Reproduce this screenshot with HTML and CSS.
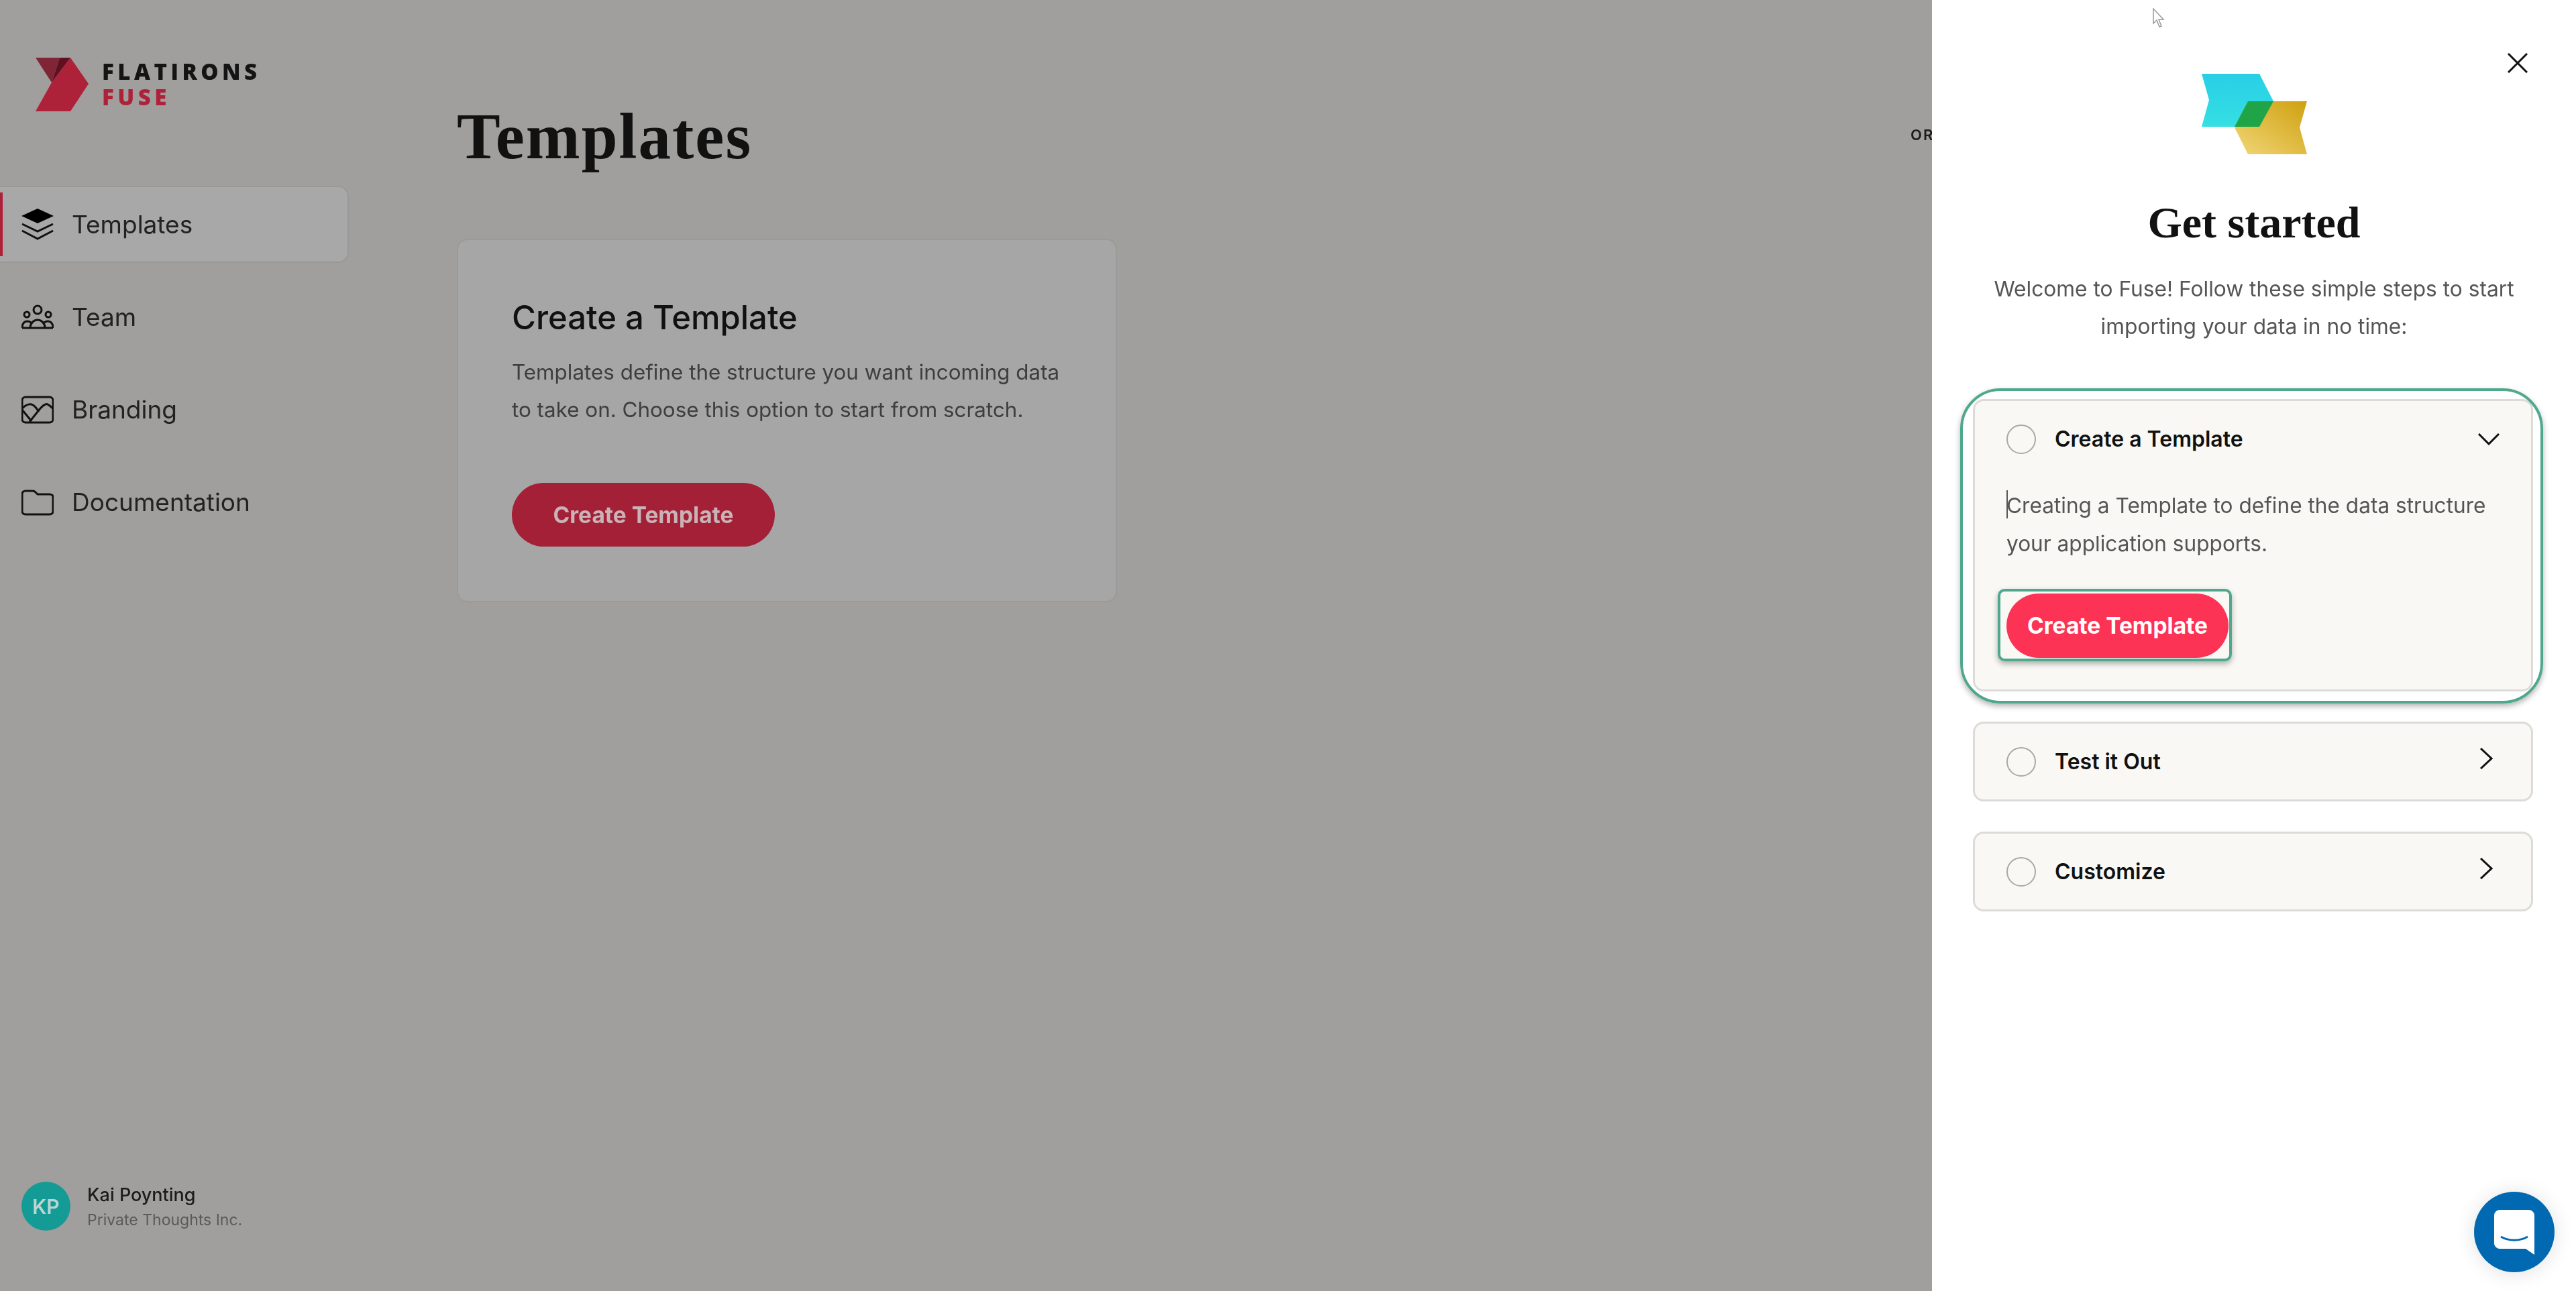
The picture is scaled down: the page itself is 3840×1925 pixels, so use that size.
FILE: index.html
```html
<!DOCTYPE html>
<html lang="en">
<head>
    <meta charset="UTF-8">
    <title>Fuse - Templates</title>
    <link rel="stylesheet" href="styles.css">
</head>
<body>
    <div class="app">
        <aside class="sidebar">
            <div class="brand">
                <svg class="brand-mark" viewBox="0 0 80 80">
                    <polygon points="52,0 79,39 52,80 0,80 24,37" fill="#ae2239"/>
                    <polygon points="0,0 36,0 24,37" fill="#7f2535"/>
                    <polygon points="36,0 52,0 24,37" fill="#5e1020"/>
                </svg>
                <div class="brand-text">
                    <span class="brand-top">FLATIRONS</span>
                    <span class="brand-bottom">FUSE</span>
                </div>
            </div>
            <nav class="nav">
                <a class="nav-item active">
                    <svg class="nav-icon" viewBox="0 0 48 48">
                        <polygon points="24,0 48,11 24,22 0,11" fill="#000"/>
                        <polyline points="1,23 24,34 47,23" fill="none" stroke="#111" stroke-width="3"/>
                        <polyline points="1,33 24,45 47,33" fill="none" stroke="#111" stroke-width="3"/>
                    </svg>
                    Templates
                </a>
                <a class="nav-item">
                    <svg class="nav-icon" viewBox="0 0 48 48">
                        <g fill="none" stroke="#111" stroke-width="3">
                            <circle cx="24" cy="13" r="6"/>
                            <circle cx="8" cy="20" r="4"/>
                            <circle cx="40" cy="20" r="4"/>
                            <path d="M1 40c0-6 3-10 8-10 2 0 4 1 5 2M47 40c0-6-3-10-8-10-2 0-4 1-5 2M13 40c0-7 5-12 11-12s11 5 11 12M1 40h46"/>
                        </g>
                    </svg>
                    Team
                </a>
                <a class="nav-item">
                    <svg class="nav-icon" viewBox="0 0 48 48">
                        <g fill="none" stroke="#111" stroke-width="3">
                            <rect x="1" y="5" width="46" height="38" rx="5"/>
                            <path d="M1 22c4-4 9-7 14-6 5 1 8 7 11 11M12 42l16-20c4-4 8-8 11-6 3 1 5 4 8 6"/>
                            <path d="M1 24l14 17"/>
                        </g>
                    </svg>
                    Branding
                </a>
                <a class="nav-item">
                    <svg class="nav-icon" viewBox="0 0 48 48">
                        <path d="M6 7h11c2 0 3 1 4 2l3 3h18c3 0 5 2 5 4v21c0 3-2 5-5 5H6c-3 0-5-2-5-5V12c0-3 2-5 5-5z" fill="none" stroke="#111" stroke-width="3"/>
                    </svg>
                    Documentation
                </a>
            </nav>
            <div class="user">
                <div class="avatar">KP</div>
                <div class="user-info">
                    <div class="user-name">Kai Poynting</div>
                    <div class="user-org">Private Thoughts Inc.</div>
                </div>
            </div>
        </aside>

        <main class="main">
            <header class="main-header">
                <h1>Templates</h1>
                <span class="org-label">OR</span>
            </header>
            <section class="card">
                <h3>Create a Template</h3>
                <p>Templates define the structure you want incoming data to take on. Choose this option to start from scratch.</p>
                <button class="btn btn-dim" type="button">Create Template</button>
            </section>
        </main>

        <aside class="panel">
            <svg class="cursor" viewBox="0 0 18 30">
                <path d="M1 1v22l5-5 4 10 3-1-4-10h7z" fill="#fff" stroke="#999" stroke-width="1.5"/>
            </svg>
            <svg class="close" viewBox="0 0 30 30">
                <path d="M1 1l28 28M29 1L1 29" stroke="#111" stroke-width="3" fill="none"/>
            </svg>
            <svg class="panel-logo" viewBox="0 0 157 120">
                <defs>
                    <linearGradient id="cyan" x1="0" y1="1" x2="0" y2="0">
                        <stop offset="0" stop-color="#35dfe3"/>
                        <stop offset="1" stop-color="#27cfe6"/>
                    </linearGradient>
                    <linearGradient id="gold" x1="0" y1="1" x2="1" y2="0">
                        <stop offset="0" stop-color="#f2d778"/>
                        <stop offset="1" stop-color="#cfa010"/>
                    </linearGradient>
                </defs>
                <polygon points="0,0 86,0 107,41 86,79 0,79 11,39" fill="url(#cyan)"/>
                <polygon points="69,41 157,41 146,80 157,120 69,120 49,80" fill="url(#gold)"/>
                <polygon points="69,41 107,41 86,79 49,79" fill="#1fa548"/>
            </svg>
            <h2>Get started</h2>
            <p class="intro">Welcome to Fuse! Follow these simple steps to start<br>importing your data in no time:</p>

            <div class="steps">
                <div class="highlight highlight-step"></div>
                <div class="step">
                    <div class="step-head">
                        <span class="radio"></span>
                        <span class="step-title">Create a Template</span>
                        <svg class="chevron-down" viewBox="0 0 32 18">
                            <path d="M1 1l15 15L31 1" fill="none" stroke="#111" stroke-width="3"/>
                        </svg>
                    </div>
                    <div class="step-body">
                        <span class="caret"></span>
                        <p>Creating a Template to define the data structure your application supports.</p>
                        <div class="btn-wrap">
                            <div class="highlight highlight-btn"></div>
                            <button class="btn btn-live" type="button">Create Template</button>
                        </div>
                    </div>
                </div>
                <div class="step">
                    <div class="step-head">
                        <span class="radio"></span>
                        <span class="step-title">Test it Out</span>
                        <svg class="chevron-right" viewBox="0 0 20 32">
                            <path d="M2 1l16 15L2 31" fill="none" stroke="#111" stroke-width="3"/>
                        </svg>
                    </div>
                </div>
                <div class="step">
                    <div class="step-head">
                        <span class="radio"></span>
                        <span class="step-title">Customize</span>
                        <svg class="chevron-right" viewBox="0 0 20 32">
                            <path d="M2 1l16 15L2 31" fill="none" stroke="#111" stroke-width="3"/>
                        </svg>
                    </div>
                </div>
            </div>

            <div class="chat">
                <svg viewBox="0 0 60 67">
                    <path d="M8 0h44c4 0 8 4 8 8v59L47 58H8c-4 0-8-4-8-8V8c0-4 4-8 8-8z" fill="#fff"/>
                    <path d="M10 40c12 7 28 7 40 0" fill="none" stroke="#0069b1" stroke-width="3"/>
                </svg>
            </div>
        </aside>
    </div>
</body>
</html>
```

FILE: styles.css
```css
* {
    box-sizing: border-box;
}
body {
    margin: 0;
    font-family: Inter, "Liberation Sans", sans-serif;
    color: #111;
    background-color: #a09f9d;
    overflow: hidden;
}
/* the source is a soft video frame */
.app {
    display: flex;
    height: 100vh;
    filter: blur(0.7px);
}

/* Sidebar */
.sidebar {
    width: 520px;
    flex-shrink: 0;
    display: flex;
    flex-direction: column;
    padding-top: 86px;
}
.brand {
    display: flex;
    align-items: center;
    gap: 19px;
    padding-left: 53px;
    height: 80px;
}
.brand-mark {
    width: 80px;
    height: 80px;
}
.brand-text {
    display: flex;
    flex-direction: column;
    font-family: "Open Sans", sans-serif;
    font-weight: 800;
    font-size: 33px;
    line-height: 38px;
    letter-spacing: 5.5px;
}
.brand-top {
    color: #141414;
}
.brand-bottom {
    color: #ae2239;
}
.nav {
    margin-top: 111px;
    display: flex;
    flex-direction: column;
    gap: 23px;
}
.nav-item {
    display: flex;
    align-items: center;
    gap: 27px;
    width: 520px;
    height: 115px;
    padding-left: 32px;
    font-size: 37px;
    color: #222;
    border: 2px solid transparent;
    border-left: 0;
    border-radius: 0 16px 16px 0;
}
.nav-item.active {
    position: relative;
    background-color: #a8a8a8;
    border-color: #999896;
}
.nav-item.active::before {
    content: "";
    position: absolute;
    left: 0;
    top: 8px;
    bottom: 8px;
    width: 4px;
    background-color: #ae1f38;
}
.nav-icon {
    width: 48px;
    height: 48px;
    flex-shrink: 0;
}
.user {
    margin-top: auto;
    margin-bottom: 87px;
    padding-left: 32px;
    display: flex;
    align-items: center;
    gap: 25px;
}
.avatar {
    width: 73px;
    height: 73px;
    border-radius: 50%;
    background-color: #159b95;
    color: #b9d6d3;
    font-size: 30px;
    font-weight: 600;
    display: flex;
    align-items: center;
    justify-content: center;
}
.user-info {
    margin-top: 5px;
}
.user-name {
    font-size: 27px;
    font-weight: 500;
    line-height: 36px;
    color: #1c1c1c;
}
.user-org {
    font-size: 23px;
    line-height: 38px;
    color: #5a5a5a;
}

/* Main */
.main {
    flex: 1;
    padding-left: 161px;
    overflow: hidden;
}
.main-header {
    display: flex;
    justify-content: space-between;
    align-items: center;
    height: 120px;
    margin-top: 144px;
}
h1 {
    margin: 0;
    font-family: "Liberation Serif", serif;
    font-weight: 700;
    font-size: 97px;
    line-height: 120px;
    letter-spacing: 2px;
    color: #111;
}
.org-label {
    width: 32px;
    overflow: hidden;
    white-space: nowrap;
    font-size: 22px;
    font-weight: 600;
    letter-spacing: 2px;
    color: #1c1c1c;
    align-self: flex-start;
    margin-top: 44px;
}
.card {
    width: 984px;
    height: 542px;
    margin-top: 92px;
    padding: 86px 80px;
    background-color: #a6a6a6;
    border: 2px solid #9b9a98;
    border-radius: 16px;
}
h3 {
    margin: 0;
    font-size: 49px;
    font-weight: 500;
    line-height: 60px;
    color: #111;
}
.card p {
    margin: 23px 0 0;
    font-size: 31.4px;
    line-height: 56px;
    color: #3e3e3e;
    max-width: 840px;
}
.btn {
    display: block;
    border: 0;
    border-radius: 48px;
    font-family: inherit;
    font-size: 33.5px;
    font-weight: 700;
}
.btn-dim {
    width: 392px;
    height: 95px;
    margin-top: 81px;
    background-color: #a32037;
    color: #c9b3b7;
}

/* Get started panel */
.panel {
    position: relative;
    width: 960px;
    flex-shrink: 0;
    background-color: #fff;
    display: flex;
    flex-direction: column;
    align-items: center;
    padding-top: 110px;
}
.cursor {
    position: absolute;
    left: 329px;
    top: 12px;
    width: 18px;
    height: 30px;
}
.close {
    position: absolute;
    left: 858px;
    top: 79px;
    width: 30px;
    height: 30px;
}
.panel-logo {
    width: 157px;
    height: 120px;
}
h2 {
    margin: 60px 0 0;
    font-family: "Liberation Serif", serif;
    font-weight: 700;
    font-size: 66px;
    line-height: 84px;
    color: #111;
}
.intro {
    margin: 29px 0 0;
    text-align: center;
    font-size: 31.7px;
    line-height: 56px;
    color: #555;
}
.steps {
    position: relative;
    width: 835px;
    align-self: flex-start;
    margin: 80px 0 0 61px;
    display: flex;
    flex-direction: column;
    gap: 45px;
}
.step {
    background-color: #f9f8f4;
    border: 3px solid #dcdbd8;
    border-radius: 16px;
}
.step-head {
    height: 113px;
    padding: 0 47px;
    display: flex;
    align-items: center;
    gap: 28px;
}
.radio {
    width: 44px;
    height: 44px;
    border: 2px solid #a8a8a6;
    border-radius: 50%;
}
.step-title {
    flex: 1;
    font-size: 32px;
    font-weight: 600;
    color: #111;
}
.chevron-down {
    width: 32px;
    height: 18px;
}
.chevron-right {
    width: 20px;
    height: 32px;
    margin-right: 10px;
    margin-top: -10px;
}
.step-body {
    position: relative;
    padding: 14px 47px 47px;
}
.step-body p {
    margin: 0;
    font-size: 31.6px;
    line-height: 57px;
    color: #555;
}
.caret {
    position: absolute;
    left: 47px;
    top: 20px;
    width: 2px;
    height: 42px;
    background-color: #555;
}
.btn-wrap {
    position: relative;
    width: 331px;
    margin-top: 46px;
}
.btn-live {
    width: 331px;
    height: 96px;
    background-color: #fd3356;
    color: #fff;
}
.highlight {
    position: absolute;
    border: 4px solid #4fa88e;
    box-shadow: 0 4px 8px rgba(0, 0, 0, 0.3);
    pointer-events: none;
}
.highlight-step {
    left: -19px;
    top: -16px;
    width: 869px;
    height: 470px;
    border-radius: 60px;
}
.highlight-btn {
    left: -13px;
    top: -7px;
    width: 349px;
    height: 108px;
    border-radius: 10px;
}
.chat {
    position: absolute;
    right: 32px;
    bottom: 28px;
    width: 120px;
    height: 120px;
    border-radius: 50%;
    background-color: #0069b1;
    box-shadow: 0 2px 30px rgba(0, 0, 0, 0.12);
    display: flex;
    align-items: center;
    justify-content: center;
}
.chat svg {
    width: 60px;
    height: 67px;
}
```
